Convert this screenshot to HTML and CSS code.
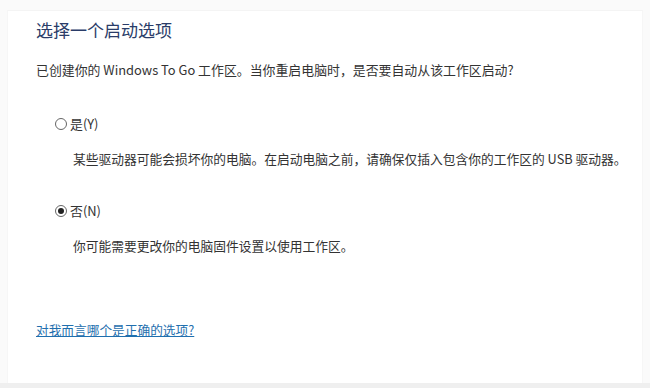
FILE: index.html
```html
<!DOCTYPE html>
<html>
<head>
<title>选择一个启动选项</title>
<meta name="viewport" content="width=device-width, initial-scale=1">
<link rel="stylesheet" href="styles.css">
</head>
<body>
<div class="page">
  <div class="panel">
    <h1 class="title">选择一个启动选项</h1>
    <p class="intro">已创建你的 Windows To Go 工作区。当你重启电脑时，是否要自动从该工作区启动?</p>

    <div class="option">
      <label class="radio"><span class="dot"></span>是(Y)</label>
      <p class="note">某些驱动器可能会损坏你的电脑。在启动电脑之前，请确保仅插入包含你的工作区的 USB 驱动器。</p>
    </div>

    <div class="option">
      <label class="radio"><span class="dot checked"></span>否(N)</label>
      <p class="note">你可能需要更改你的电脑固件设置以使用工作区。</p>
    </div>

    <a class="help" href="#">对我而言哪个是正确的选项?</a>
  </div>
  <div class="footer"></div>
</div>
</body>
</html>
```

FILE: styles.css
```css
body { margin: 0; background-color: #fff; font-family: "Noto Sans CJK SC", "Noto Sans", sans-serif; color: #333; }
.page { width: 650px; height: 388px; display: flex; flex-direction: column; background-color: #fafafa; }
.panel { flex: 1; margin: 10px 7px 0 7px; background-color: #fff; padding: 0 10px 0 28px; border-top: 1px solid #f4f4f4; border-left: 1px solid #f6f6f6; border-right: 1px solid #f6f6f6; }
.title { font-size: 17px; font-weight: normal; color: #2a3c68; margin: 7px 0 0 0; line-height: 24px; }
.intro { font-size: 12.9px; margin: 19px 0 0 0; line-height: 18px; white-space: nowrap; }
.option { margin-top: 36px; }
.option + .option { margin-top: 34px; }
.radio { display: flex; align-items: center; font-size: 12.9px; line-height: 18px; margin-left: 19px; }
.dot { width: 12px; height: 12px; border: 1px solid #666; border-radius: 50%; margin-right: 3px; box-sizing: border-box; display: flex; align-items: center; justify-content: center; background-color: #fff; }
.dot.checked::after { content: ''; width: 6px; height: 6px; border-radius: 50%; background-color: #222; }
.note { font-size: 12.75px; line-height: 18px; margin: 17px 0 0 37px; white-space: nowrap; }
.help { display: inline-block; margin-top: 66px; font-size: 12.7px; line-height: 18px; color: #1f6fae; text-decoration: underline; }
.footer { height: 5px; background-color: #efefef; }
```
